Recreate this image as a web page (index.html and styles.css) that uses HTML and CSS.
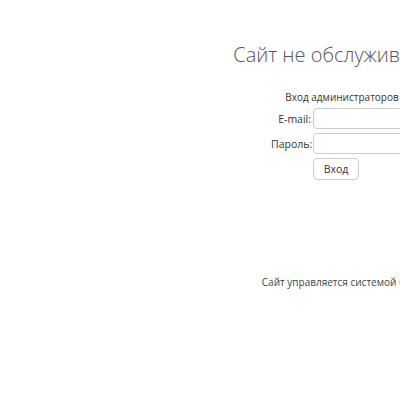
FILE: index.html
```html
<!DOCTYPE html>
<html lang="ru">
<head>
  <meta charset="UTF-8" />
  <title>Сайт не обслуживается</title>
  <link rel="stylesheet" href="styles.css">
</head>
<body>
  <div class="page">
    <h1 class="title">Сайт не обслуживается</h1>
    <form class="login">
      <div class="login-head">Вход администраторов</div>
      <label for="email">E-mail:</label>
      <input type="text" id="email" />
      <label for="pass">Пароль:</label>
      <input type="password" id="pass" />
      <span></span>
      <div class="login-btn"><button type="submit">Вход</button></div>
    </form>
    <p class="footer">Сайт управляется системой <a href="#">uCoz</a></p>
  </div>
</body>
</html>
```

FILE: styles.css
```css
/* страница-заглушка */
body {
  margin: 0;
  background: #fff;
  font-family: 'Open Sans', sans-serif;
  color: #333;
}
.page {
  width: 684px;
  text-align: center;
}
.title {
  margin: 0;
  padding-top: 41px;
  font-size: 20px;
  font-weight: 300;
  color: #555;
}
.login {
  display: grid;
  grid-template-columns: 40px 100px;
  column-gap: 2px;
  row-gap: 4px;
  justify-content: center;
  align-items: center;
  margin-top: 22px;
  font-size: 10.5px;
}
.login-head {
  grid-column: 1 / 3;
  font-size: 10px;
  text-align: center;
}
.login label {
  text-align: right;
}
.login input {
  box-sizing: border-box;
  width: 100%;
  height: 21px;
  border: 1px solid #ccc;
  border-radius: 4px;
  background: #fff;
}
.login-btn {
  text-align: left;
}
.login button {
  width: 46px;
  height: 22px;
  padding: 0;
  border: 1px solid #ccc;
  border-radius: 4px;
  background: #fff;
  font-family: inherit;
  font-size: 10.5px;
  color: #333;
}
.footer {
  margin: 95px 0 0;
  font-size: 10px;
  color: #444;
}
.footer a {
  color: #2a6db4;
  text-decoration: none;
}
```
